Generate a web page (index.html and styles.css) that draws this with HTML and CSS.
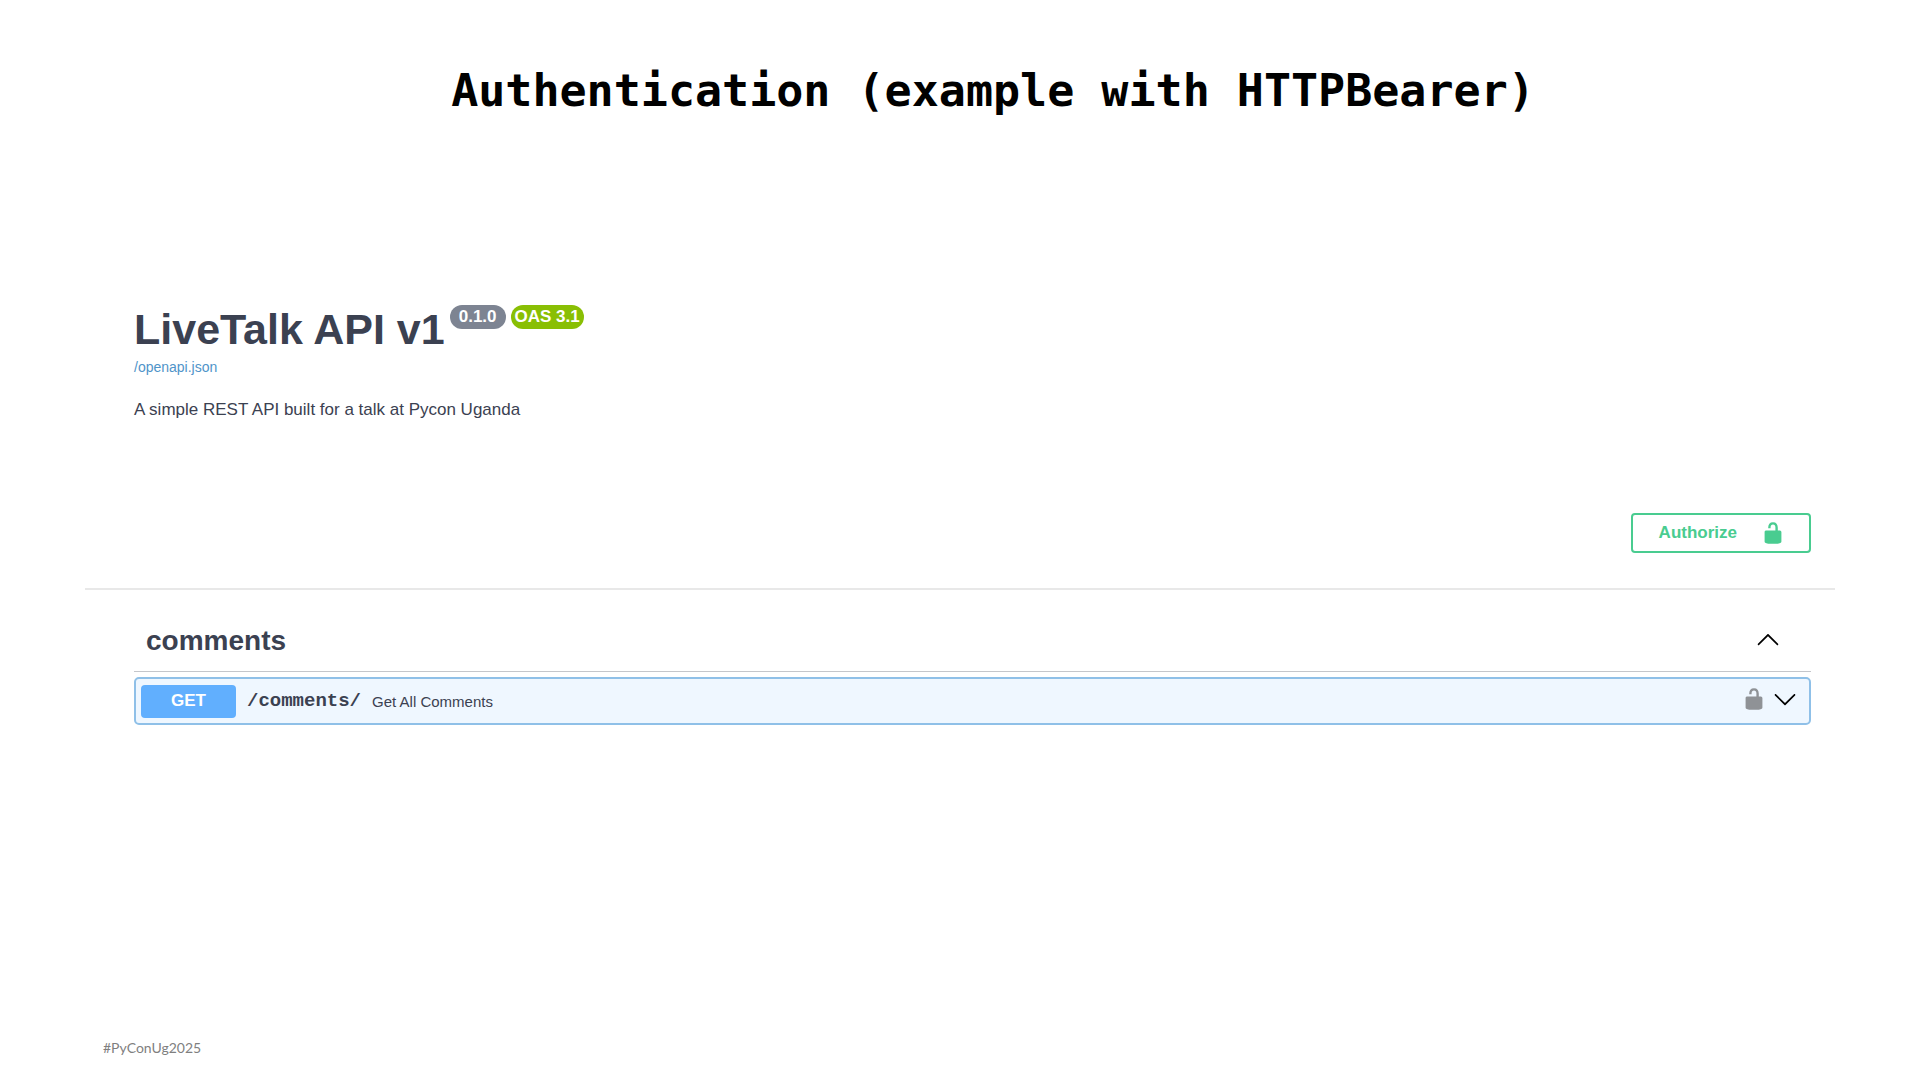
FILE: index.html
```html
<!DOCTYPE html>
<html lang="en">
<head>
    <meta charset="UTF-8">
    <meta name="viewport" content="width=device-width, initial-scale=1.0">
    <title>Authentication (example with HTTPBearer)</title>
    <link rel="stylesheet" href="styles.css">
</head>
<body>
    <h1 class="slide-title">Authentication (example with HTTPBearer)</h1>

    <main class="swagger">
        <section class="info">
            <div class="info-title">
                <h2>LiveTalk API v1</h2>
                <span class="badge">0.1.0</span>
                <span class="badge badge-oas">OAS 3.1</span>
            </div>
            <a class="info-link" href="#">/openapi.json</a>
            <p class="info-text">A simple REST API built for a talk at Pycon Uganda</p>
        </section>

        <div class="auth-bar">
            <button class="btn-authorize" type="button">
                Authorize
                <svg class="icon" viewBox="0 0 20 20" aria-hidden="true"><path d="M15.8 8H14V5.6C14 2.703 12.665 1 10 1 7.334 1 6 2.703 6 5.6V6h2v-.801C8 3.754 8.797 3 10 3c1.203 0 2 .754 2 2.199V8H4c-.553 0-1 .646-1 1.199V17c0 .549.428 1.139.951 1.307l1.197.387C5.672 18.861 6.55 19 7.1 19h5.8c.549 0 1.428-.139 1.951-.307l1.196-.387c.524-.167.953-.757.953-1.306V9.199C17 8.646 16.352 8 15.8 8z"/></svg>
            </button>
        </div>

        <section class="operations">
            <div class="tag">
                <h3>comments</h3>
                <button class="btn-icon" type="button" aria-label="Collapse comments">
                    <svg class="icon" viewBox="0 0 20 20" aria-hidden="true"><path d="M17.418 14.908c.272.268.709.268.979 0s.271-.701 0-.969l-7.908-7.83c-.27-.268-.707-.268-.979 0l-7.908 7.83c-.27.268-.27.701 0 .969.271.268.709.268.979 0L10 7.767z"/></svg>
                </button>
            </div>
            <div class="opblock">
                <button class="method" type="button">GET</button>
                <span class="path">/comments/</span>
                <span class="summary">Get All Comments</span>
                <button class="btn-icon btn-lock" type="button" aria-label="Authorization">
                    <svg class="icon" viewBox="0 0 20 20" aria-hidden="true"><path d="M15.8 8H14V5.6C14 2.703 12.665 1 10 1 7.334 1 6 2.703 6 5.6V6h2v-.801C8 3.754 8.797 3 10 3c1.203 0 2 .754 2 2.199V8H4c-.553 0-1 .646-1 1.199V17c0 .549.428 1.139.951 1.307l1.197.387C5.672 18.861 6.55 19 7.1 19h5.8c.549 0 1.428-.139 1.951-.307l1.196-.387c.524-.167.953-.757.953-1.306V9.199C17 8.646 16.352 8 15.8 8z"/></svg>
                </button>
                <button class="btn-icon" type="button" aria-label="Expand operation">
                    <svg class="icon" viewBox="0 0 20 20" aria-hidden="true"><path d="M17.418 6.109c.272-.268.709-.268.979 0s.271.701 0 .969l-7.908 7.83c-.27.268-.707.268-.979 0l-7.908-7.83c-.27-.268-.27-.701 0-.969.271-.268.709-.268.979 0L10 13.25z"/></svg>
                </button>
            </div>
        </section>
    </main>

    <footer class="slide-footer">#PyConUg2025</footer>
</body>
</html>
```
FILE: styles.css
```css
* { box-sizing: border-box; }
body {
    display: flex;
    flex-direction: column;
    min-height: 100vh;
    margin: 0;
    background: #fff;
    color: #3b4151;
    font-family: "Liberation Sans", Arial, sans-serif;
}
h1, h2, h3, p { margin: 0; }
button {
    border: none;
    padding: 0;
    font-family: inherit;
    cursor: pointer;
}
.icon { display: block; width: 24px; height: 24px; fill: currentColor; }

.slide-title {
    padding: 63px 0 0 66px;
    color: #000;
    font-family: "DejaVu Sans Mono", monospace;
    font-size: 45px;
    line-height: 56px;
    text-align: center;
}

.swagger { flex: 1; padding: 183px 85px 0; }
.info { padding: 0 49px; }
.info-title { display: flex; align-items: flex-start; gap: 5px; }
.info-title h2 { font-size: 43px; line-height: 54px; }
.badge {
    margin-top: 3px;
    padding: 0 9px;
    border-radius: 12px;
    background: #7d8492;
    color: #fff;
    font-size: 17px;
    font-weight: bold;
    line-height: 24px;
}
.badge-oas { padding: 0 4px; background: #89bf04; }
.info-link {
    display: block;
    color: #4f94c9;
    font-size: 14px;
    line-height: 22px;
    text-decoration: none;
}
.info-text { margin-top: 20px; font-size: 17px; line-height: 24px; }

.auth-bar {
    display: flex;
    justify-content: flex-end;
    margin-top: 91px;
    padding: 0 24px 35px;
    border-bottom: 2px solid #e8e8e8;
}
.btn-authorize {
    display: flex;
    align-items: center;
    gap: 24px;
    height: 40px;
    padding: 0 24px 0 26px;
    border: 2px solid #49cc90;
    border-radius: 4px;
    background: transparent;
    color: #49cc90;
    font-size: 17px;
    font-weight: bold;
}

.operations { padding: 20px 24px 0 49px; }
.tag {
    display: flex;
    align-items: center;
    justify-content: space-between;
    height: 62px;
    padding: 0 31px 0 12px;
    border-bottom: 1px solid #c4c6cb;
}
.tag h3 { font-size: 28px; }
.btn-icon { padding-bottom: 4px; background: transparent; color: #000; }
.btn-lock { color: #8f9296; margin-left: auto; }
.opblock {
    display: flex;
    align-items: center;
    gap: 11px;
    height: 48px;
    margin-top: 5px;
    padding: 0 12px 0 5px;
    border: 2px solid #8fc0e8;
    border-radius: 5px;
    background: #eff7ff;
}
.opblock .btn-icon + .btn-icon { margin-left: -4px; }
.method {
    width: 95px;
    height: 33px;
    border-radius: 4px;
    background: #61affe;
    color: #fff;
    font-size: 17px;
    font-weight: bold;
}
.path {
    font-family: "Liberation Mono", monospace;
    font-size: 19px;
    font-weight: bold;
}
.summary { font-size: 15px; }

.slide-footer {
    padding: 0 103px 22px;
    color: #7f7f7f;
    font-family: Lato, sans-serif;
    font-size: 14px;
    line-height: 20px;
}
```
